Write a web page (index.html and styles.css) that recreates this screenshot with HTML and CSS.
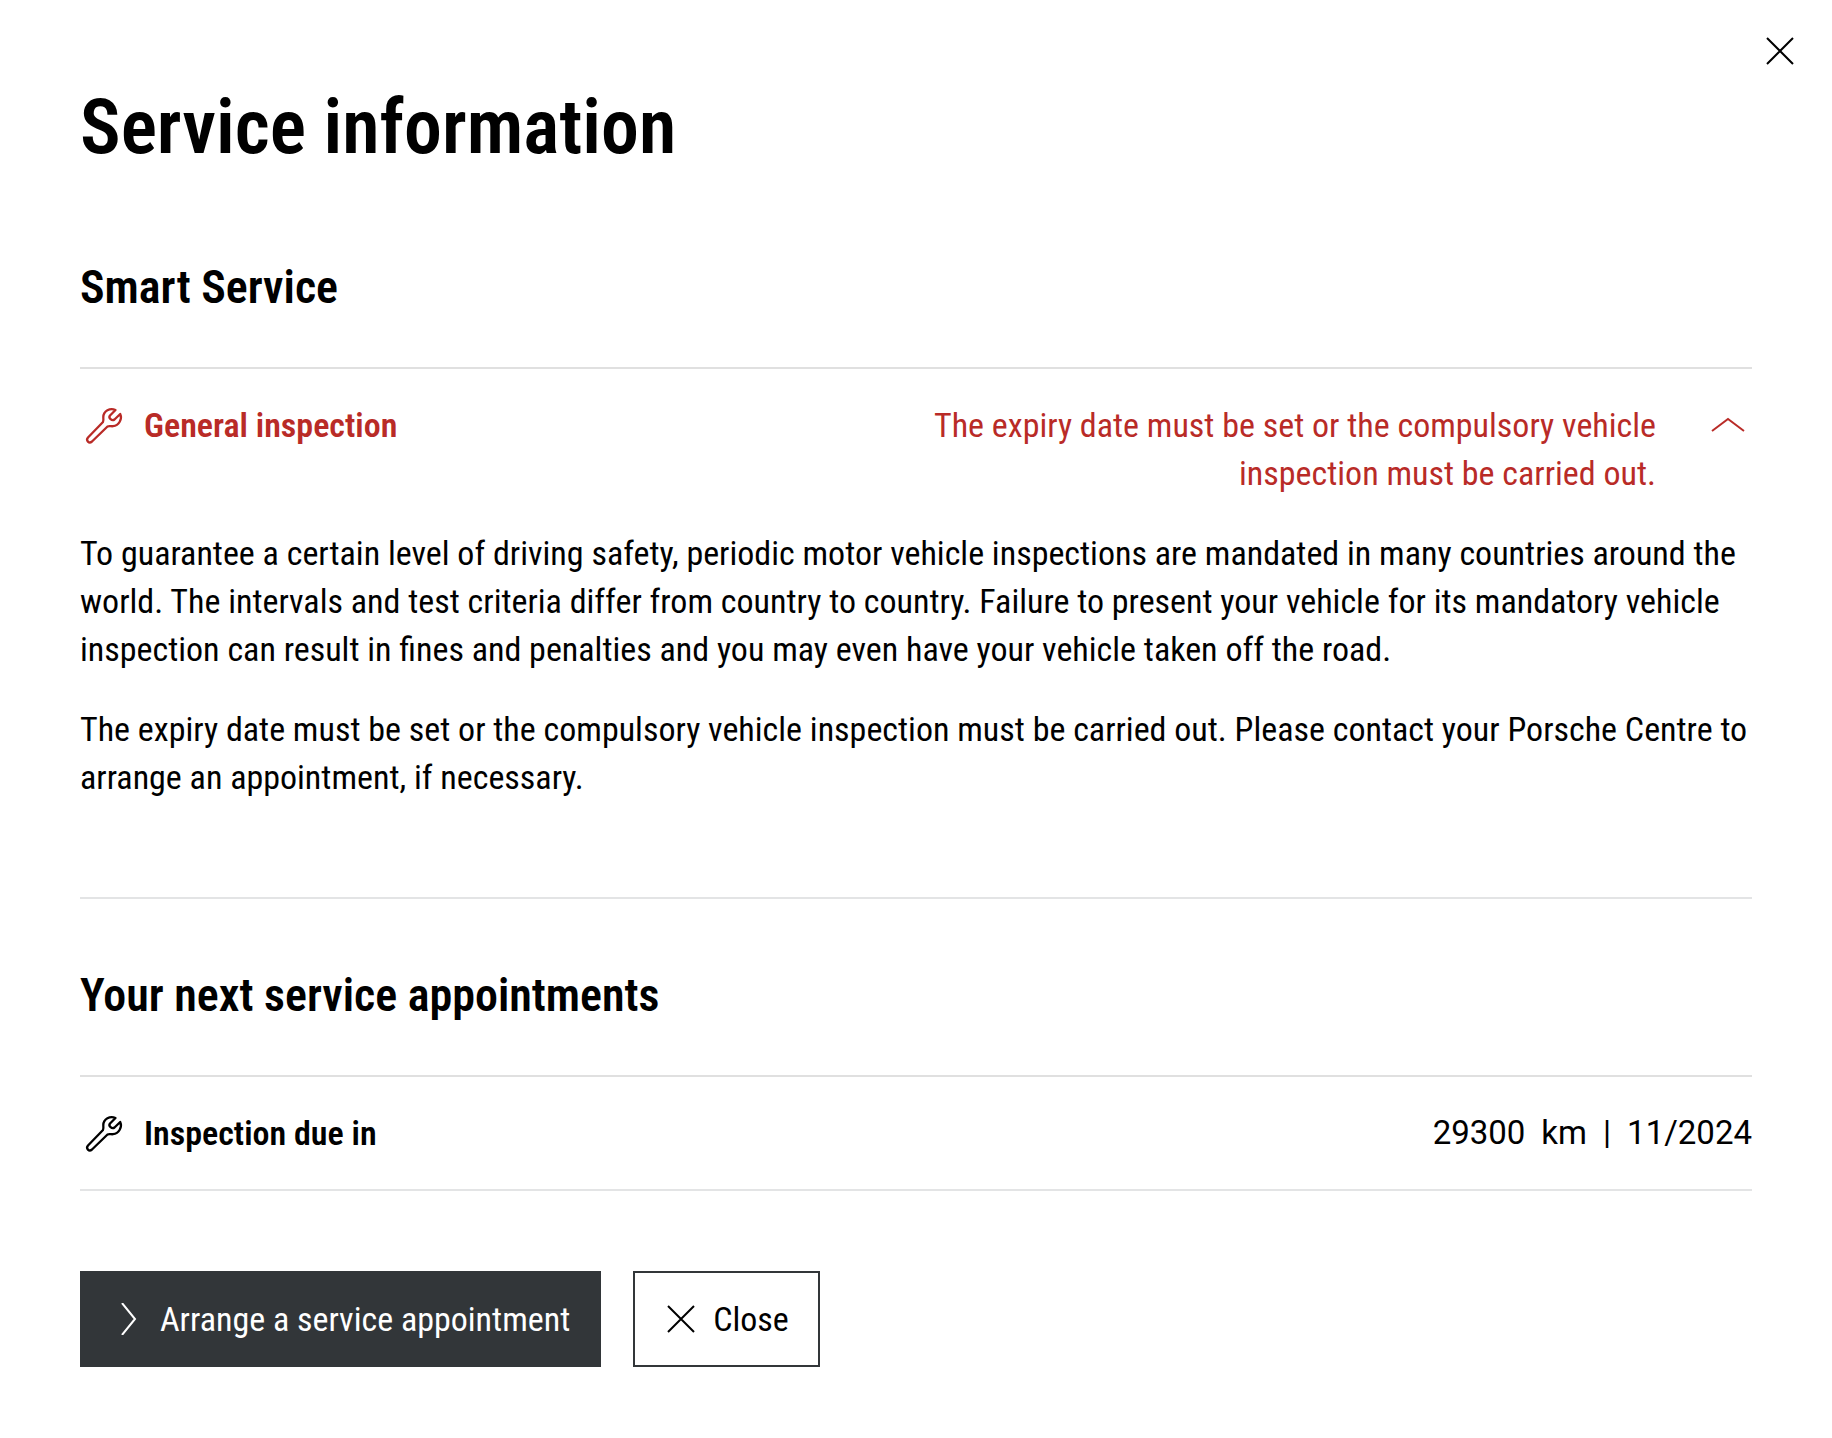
FILE: index.html
```html
<!DOCTYPE html>
<html lang="en">
<head>
<meta charset="utf-8">
<meta name="viewport" content="width=device-width, initial-scale=1">
<title>Service information</title>
<link rel="stylesheet" href="styles.css">
</head>
<body>
<svg class="sprite" aria-hidden="true">
  <symbol id="wrench" viewBox="0 0 48 48">
    <path stroke-width="2.300" stroke-linejoin="round" d="M35.500 9C30 6.500 23.500 10 23.300 16C23.500 18.500 23.500 20 23 21L8 36.500C5.500 39.500 9 43 12 40.500L27.500 25.500C29.500 24.500 31 25.500 33 25.200C39 24.500 42.500 18 40.200 13L34.500 18.500C32 20.500 28 17 30 14.500Z"/>
  </symbol>
  <symbol id="cross" viewBox="0 0 32 32">
    <path d="M3 3L29 29M29 3L3 29"/>
  </symbol>
</svg>
<main class="dialog" role="dialog" aria-labelledby="title">
  <button class="dismiss" type="button" aria-label="Close dialog"><svg class="icon icon-small"><use href="#cross"/></svg></button>
  <h1 class="title" id="title">Service information</h1>

  <section class="section">
    <h2 class="heading">Smart Service</h2>
    <div class="entry entry-open">
      <div class="row warning">
        <svg class="icon" aria-hidden="true"><use href="#wrench"/></svg>
        <h3 class="label">General inspection</h3>
        <p class="status">The expiry date must be set or the compulsory vehicle inspection must be carried out.</p>
        <button class="toggle" type="button" aria-expanded="true" aria-controls="details" aria-label="Collapse general inspection">
          <svg class="icon" viewBox="0 0 48 48"><path d="M8 30L24 18L40 30"/></svg>
        </button>
      </div>
      <div class="details" id="details">
        <p>To guarantee a certain level of driving safety, periodic motor vehicle inspections are mandated in many countries around the world. The intervals and test criteria differ from country to country. Failure to present your vehicle for its mandatory vehicle inspection can result in fines and penalties and you may even have your vehicle taken off the road.</p>
        <p>The expiry date must be set or the compulsory vehicle inspection must be carried out. Please contact your Porsche Centre to arrange an appointment, if necessary.</p>
      </div>
    </div>
  </section>

  <section class="section section-next">
    <h2 class="heading">Your next service appointments</h2>
    <div class="entry">
      <div class="row">
        <svg class="icon" aria-hidden="true"><use href="#wrench"/></svg>
        <h3 class="label">Inspection due in</h3>
        <p class="due"><span>29300</span><span>km</span><span>|</span><span>11/2024</span></p>
      </div>
    </div>
  </section>

  <div class="actions">
    <button class="button button-primary" type="button">
      <svg class="icon icon-small" viewBox="0 0 32 32" aria-hidden="true"><path d="M10 0L23 16L10 32"/></svg>
      <span class="caption">Arrange a service appointment</span>
    </button>
    <button class="button" type="button">
      <svg class="icon icon-small" aria-hidden="true"><use href="#cross"/></svg>
      <span class="caption">Close</span>
    </button>
  </div>
</main>
</body>
</html>
```
FILE: styles.css
```css
* {
  box-sizing: border-box;
}

body {
  margin: 0;
  background: #fff;
  color: #000;
  font-family: "Roboto Condensed", Roboto, sans-serif;
  font-size: 34px;
  line-height: 48px;
}

h1, h2, h3, p {
  margin: 0;
}

button {
  padding: 0;
  border: 0;
  background: none;
  color: inherit;
  font: inherit;
  cursor: pointer;
}

.sprite {
  display: none;
}

.icon {
  display: block;
  flex: none;
  width: 48px;
  height: 48px;
  fill: none;
  stroke: currentColor;
  stroke-width: 2px;
}

.icon-small {
  width: 32px;
  height: 32px;
}

.dialog {
  position: relative;
  padding: 80px 80px 64px;
}

.dismiss {
  position: absolute;
  top: 35px;
  right: 36px;
}

.title {
  margin-bottom: 80px;
  font-size: 76px;
  font-weight: 600;
  line-height: 95px;
}

.heading {
  margin-bottom: 48px;
  font-size: 46px;
  font-weight: 600;
  line-height: 64px;
}

.section-next {
  padding-top: 64px;
}

.entry {
  padding: 32px 0;
  border-top: 2px solid #e0e0e0;
  border-bottom: 2px solid #e3e4e5;
}

.entry-open {
  padding-bottom: 96px;
}

.row {
  display: flex;
  align-items: flex-start;
}

.warning {
  color: #b92b27;
}

.label {
  flex: 1;
  margin-left: 16px;
  font-size: 34px;
  font-weight: 600;
}

.status {
  width: 46%;
  text-align: right;
}

.toggle {
  margin-left: 48px;
}

.details p {
  margin-top: 32px;
}

.due {
  display: flex;
  gap: 16px;
  font-family: Roboto, sans-serif;
  font-size: 33px;
}

.actions {
  display: flex;
  flex-wrap: wrap;
  gap: 32px;
  margin-top: 80px;
}

.button {
  display: flex;
  align-items: center;
  gap: 16px;
  height: 96px;
  padding: 0 29px 0 30px;
  border: 2px solid #323639;
}

.button-primary {
  background: #323639;
  color: #fff;
}
```
